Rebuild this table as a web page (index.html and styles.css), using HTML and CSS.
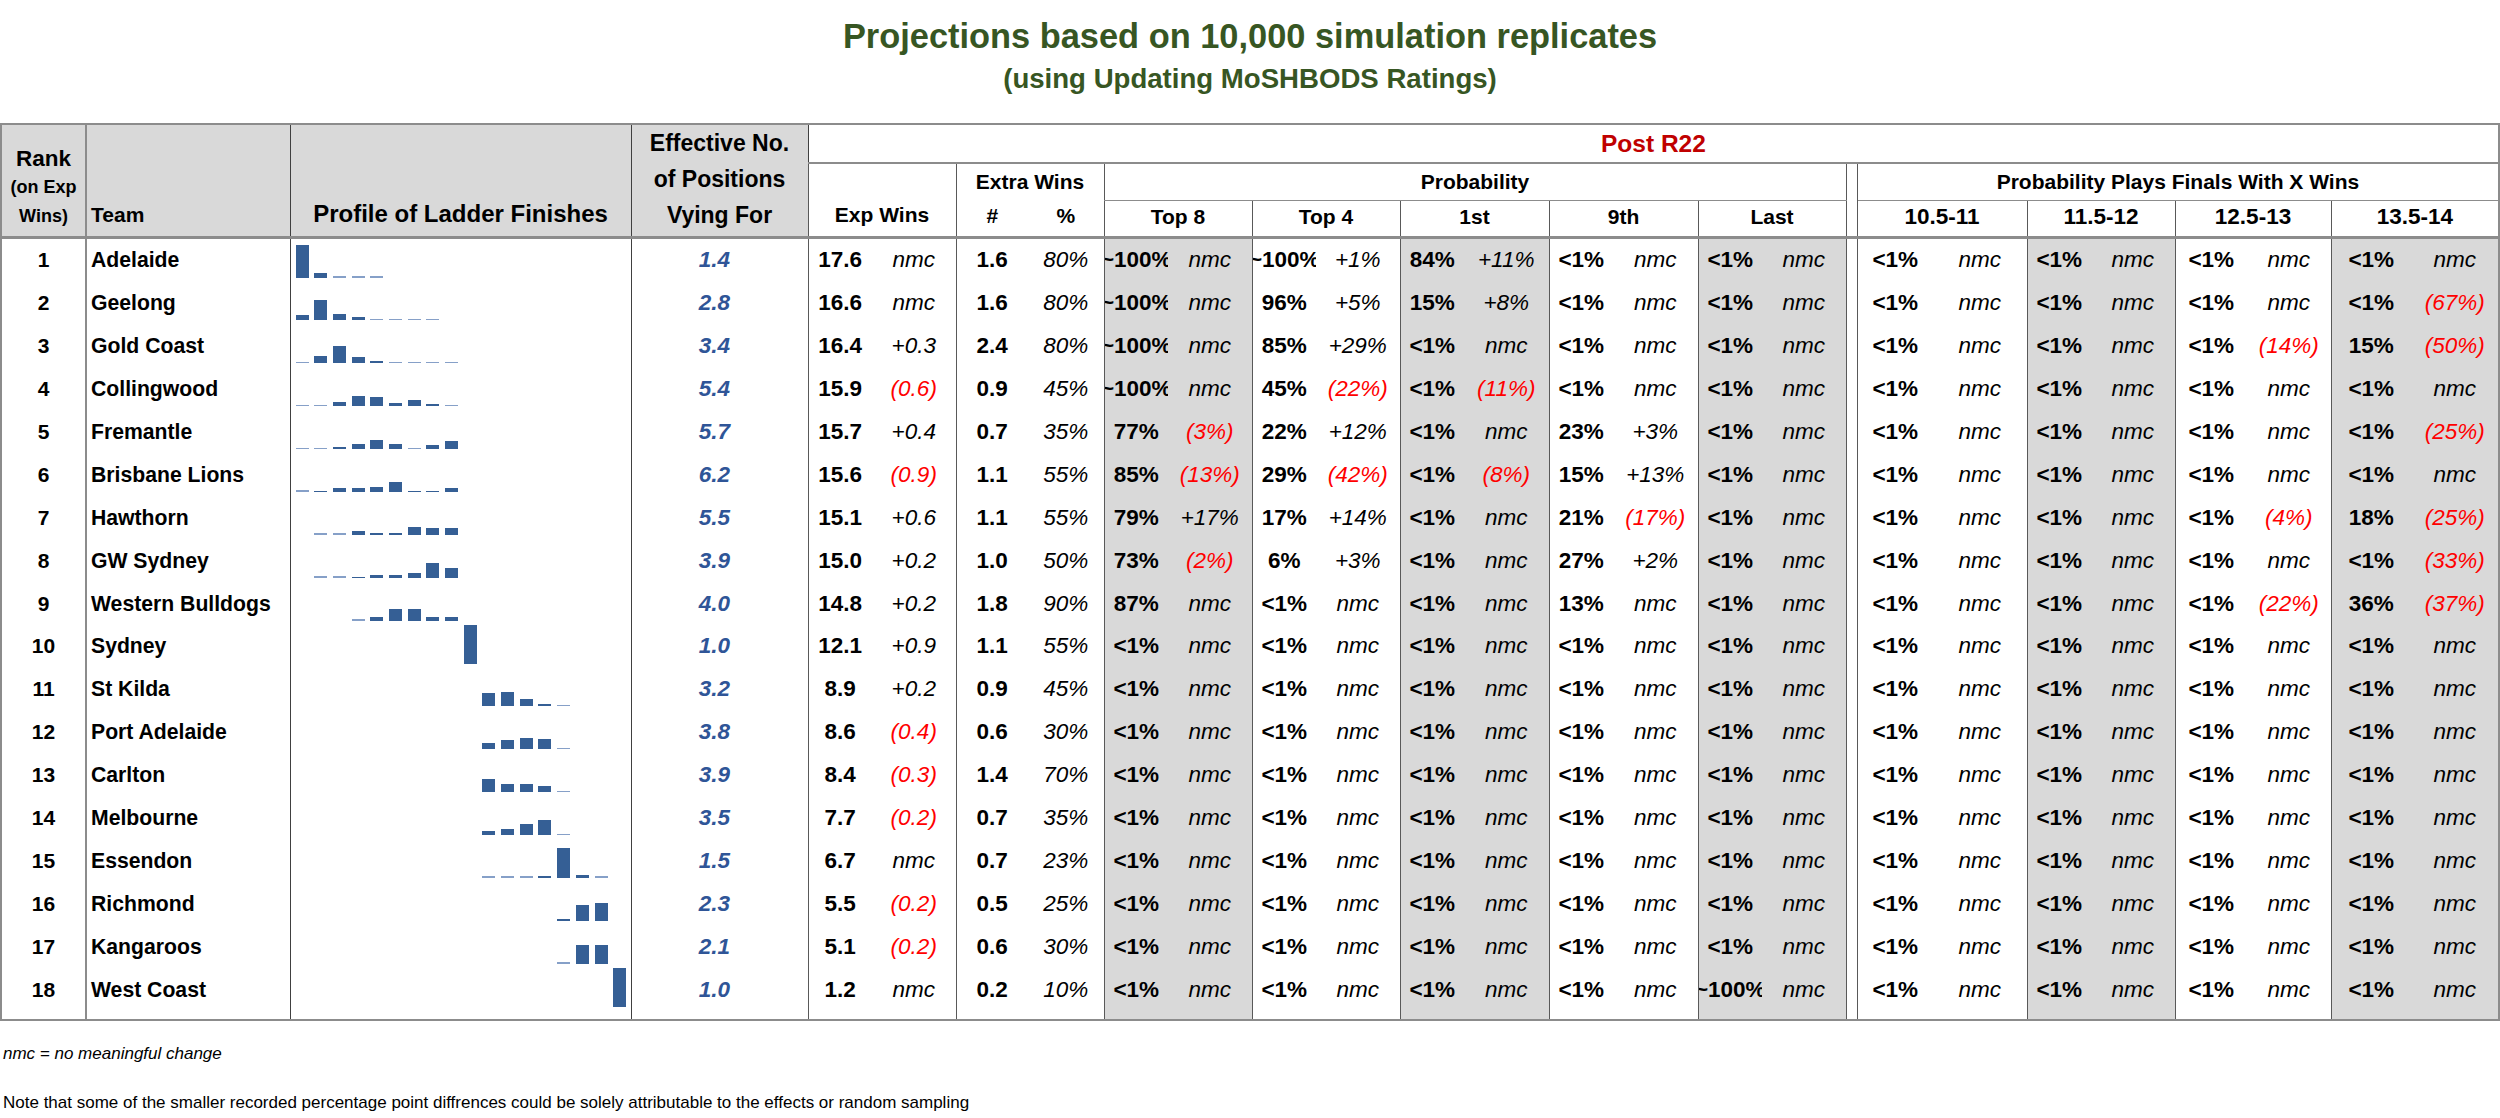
FILE: index.html
```html
<!DOCTYPE html>
<html>
<head>
<meta charset="utf-8">
<link rel="stylesheet" href="styles.css">
</head>
<body>
<div class="titles">
  <div class="t1">Projections based on 10,000 simulation replicates</div>
  <div class="t2">(using Updating MoSHBODS Ratings)</div>
</div>
<table class="proj">
<colgroup>
<col class="w85"><col class="w204"><col class="w341"><col class="w177">
<col class="w64"><col class="w84">
<col class="w72"><col class="w76">
<col class="w64 gry"><col class="w84 gry">
<col class="w64"><col class="w84">
<col class="w64 gry"><col class="w85 gry">
<col class="w64"><col class="w85">
<col class="w64 gry"><col class="w84 gry">
<col class="w11">
<col class="w76"><col class="w94">
<col class="w64 gry"><col class="w84 gry">
<col class="w72"><col class="w84">
<col class="w80 gry"><col class="w88 gry">
</colgroup>
<thead>
<tr class="hA">
  <th rowspan="3" class="hl rkh">Rank<br><span class="sm">(on Exp<br>Wins)</span></th>
  <th rowspan="3" class="hl tmh">Team</th>
  <th rowspan="3" class="hl pfh">Profile of Ladder Finishes</th>
  <th rowspan="3" class="hl efh">Effective No.<br>of Positions<br>Vying For</th>
  <th colspan="23" class="post">Post R22</th>
</tr>
<tr class="hB">
  <th colspan="2" rowspan="2" class="gl expw">Exp Wins</th>
  <th colspan="2" class="gl xw">Extra Wins</th>
  <th colspan="10" class="gl grp">Probability</th>
  <th rowspan="2" class="sp hb"></th>
  <th colspan="8" class="gl grp">Probability Plays Finals With X Wins</th>
</tr>
<tr class="hC">
  <th class="gl hb">#</th><th class="hb">%</th>
  <th colspan="2" class="gl hb">Top 8</th>
  <th colspan="2" class="gl hb">Top 4</th>
  <th colspan="2" class="gl hb">1st</th>
  <th colspan="2" class="gl hb">9th</th>
  <th colspan="2" class="gl hb">Last</th>
  <th colspan="2" class="gl hb rng">10.5-11</th>
  <th colspan="2" class="gl hb rng">11.5-12</th>
  <th colspan="2" class="gl hb rng">12.5-13</th>
  <th colspan="2" class="gl hb rng">13.5-14</th>
</tr>
</thead>
<tbody>
<tr>
<td class="rk">1</td><td class="tm">Adelaide</td>
<td class="pf"><div class="spark"><i style="height:32.3px"></i><i style="height:5px"></i><i class="t"></i><i class="t"></i><i class="t"></i></div></td>
<td class="ef">1.4</td>
<td class="v gl">17.6</td><td class="c">nmc</td>
<td class="v gl">1.6</td><td class="c">80%</td>
<td class="v gl"><div class="ov">~100%</div></td><td class="c">nmc</td>
<td class="v gl"><div class="ov">~100%</div></td><td class="c">+1%</td>
<td class="v gl">84%</td><td class="c">+11%</td>
<td class="v gl">&lt;1%</td><td class="c">nmc</td>
<td class="v gl">&lt;1%</td><td class="c">nmc</td>
<td class="sp"></td>
<td class="v gl">&lt;1%</td><td class="c">nmc</td>
<td class="v gl">&lt;1%</td><td class="c">nmc</td>
<td class="v gl">&lt;1%</td><td class="c">nmc</td>
<td class="v gl">&lt;1%</td><td class="c">nmc</td>
</tr>
<tr>
<td class="rk">2</td><td class="tm">Geelong</td>
<td class="pf"><div class="spark"><i style="height:5.4px"></i><i style="height:20.4px"></i><i style="height:6.5px"></i><i style="height:3.1px"></i><i class="t"></i><i class="t"></i><i class="t"></i><i class="t"></i></div></td>
<td class="ef">2.8</td>
<td class="v gl">16.6</td><td class="c">nmc</td>
<td class="v gl">1.6</td><td class="c">80%</td>
<td class="v gl"><div class="ov">~100%</div></td><td class="c">nmc</td>
<td class="v gl">96%</td><td class="c">+5%</td>
<td class="v gl">15%</td><td class="c">+8%</td>
<td class="v gl">&lt;1%</td><td class="c">nmc</td>
<td class="v gl">&lt;1%</td><td class="c">nmc</td>
<td class="sp"></td>
<td class="v gl">&lt;1%</td><td class="c">nmc</td>
<td class="v gl">&lt;1%</td><td class="c">nmc</td>
<td class="v gl">&lt;1%</td><td class="c">nmc</td>
<td class="v gl">&lt;1%</td><td class="c r">(67%)</td>
</tr>
<tr>
<td class="rk">3</td><td class="tm">Gold Coast</td>
<td class="pf"><div class="spark"><i class="t"></i><i style="height:6.9px"></i><i style="height:16.9px"></i><i style="height:5.8px"></i><i style="height:2.3px"></i><i class="t"></i><i class="t"></i><i class="t"></i><i class="t"></i></div></td>
<td class="ef">3.4</td>
<td class="v gl">16.4</td><td class="c">+0.3</td>
<td class="v gl">2.4</td><td class="c">80%</td>
<td class="v gl"><div class="ov">~100%</div></td><td class="c">nmc</td>
<td class="v gl">85%</td><td class="c">+29%</td>
<td class="v gl">&lt;1%</td><td class="c">nmc</td>
<td class="v gl">&lt;1%</td><td class="c">nmc</td>
<td class="v gl">&lt;1%</td><td class="c">nmc</td>
<td class="sp"></td>
<td class="v gl">&lt;1%</td><td class="c">nmc</td>
<td class="v gl">&lt;1%</td><td class="c">nmc</td>
<td class="v gl">&lt;1%</td><td class="c r">(14%)</td>
<td class="v gl">15%</td><td class="c r">(50%)</td>
</tr>
<tr>
<td class="rk">4</td><td class="tm">Collingwood</td>
<td class="pf"><div class="spark"><i class="t"></i><i class="t"></i><i style="height:4.3px"></i><i style="height:10px"></i><i style="height:9px"></i><i style="height:3.3px"></i><i style="height:5.7px"></i><i style="height:2.3px"></i><i class="t"></i></div></td>
<td class="ef">5.4</td>
<td class="v gl">15.9</td><td class="c r">(0.6)</td>
<td class="v gl">0.9</td><td class="c">45%</td>
<td class="v gl"><div class="ov">~100%</div></td><td class="c">nmc</td>
<td class="v gl">45%</td><td class="c r">(22%)</td>
<td class="v gl">&lt;1%</td><td class="c r">(11%)</td>
<td class="v gl">&lt;1%</td><td class="c">nmc</td>
<td class="v gl">&lt;1%</td><td class="c">nmc</td>
<td class="sp"></td>
<td class="v gl">&lt;1%</td><td class="c">nmc</td>
<td class="v gl">&lt;1%</td><td class="c">nmc</td>
<td class="v gl">&lt;1%</td><td class="c">nmc</td>
<td class="v gl">&lt;1%</td><td class="c">nmc</td>
</tr>
<tr>
<td class="rk">5</td><td class="tm">Fremantle</td>
<td class="pf"><div class="spark"><i class="t"></i><i class="t"></i><i style="height:1.7px"></i><i style="height:5px"></i><i style="height:9px"></i><i style="height:5px"></i><i class="t"></i><i style="height:4px"></i><i style="height:7.7px"></i></div></td>
<td class="ef">5.7</td>
<td class="v gl">15.7</td><td class="c">+0.4</td>
<td class="v gl">0.7</td><td class="c">35%</td>
<td class="v gl">77%</td><td class="c r">(3%)</td>
<td class="v gl">22%</td><td class="c">+12%</td>
<td class="v gl">&lt;1%</td><td class="c">nmc</td>
<td class="v gl">23%</td><td class="c">+3%</td>
<td class="v gl">&lt;1%</td><td class="c">nmc</td>
<td class="sp"></td>
<td class="v gl">&lt;1%</td><td class="c">nmc</td>
<td class="v gl">&lt;1%</td><td class="c">nmc</td>
<td class="v gl">&lt;1%</td><td class="c">nmc</td>
<td class="v gl">&lt;1%</td><td class="c r">(25%)</td>
</tr>
<tr>
<td class="rk">6</td><td class="tm">Brisbane Lions</td>
<td class="pf"><div class="spark"><i class="t"></i><i style="height:1.3px"></i><i style="height:4px"></i><i style="height:4px"></i><i style="height:5.3px"></i><i style="height:9.7px"></i><i style="height:1.3px"></i><i style="height:1.3px"></i><i style="height:4px"></i></div></td>
<td class="ef">6.2</td>
<td class="v gl">15.6</td><td class="c r">(0.9)</td>
<td class="v gl">1.1</td><td class="c">55%</td>
<td class="v gl">85%</td><td class="c r">(13%)</td>
<td class="v gl">29%</td><td class="c r">(42%)</td>
<td class="v gl">&lt;1%</td><td class="c r">(8%)</td>
<td class="v gl">15%</td><td class="c">+13%</td>
<td class="v gl">&lt;1%</td><td class="c">nmc</td>
<td class="sp"></td>
<td class="v gl">&lt;1%</td><td class="c">nmc</td>
<td class="v gl">&lt;1%</td><td class="c">nmc</td>
<td class="v gl">&lt;1%</td><td class="c">nmc</td>
<td class="v gl">&lt;1%</td><td class="c">nmc</td>
</tr>
<tr>
<td class="rk">7</td><td class="tm">Hawthorn</td>
<td class="pf"><div class="spark"><i></i><i class="t"></i><i class="t"></i><i style="height:3.7px"></i><i style="height:2px"></i><i style="height:2px"></i><i style="height:8px"></i><i style="height:7px"></i><i style="height:7px"></i></div></td>
<td class="ef">5.5</td>
<td class="v gl">15.1</td><td class="c">+0.6</td>
<td class="v gl">1.1</td><td class="c">55%</td>
<td class="v gl">79%</td><td class="c">+17%</td>
<td class="v gl">17%</td><td class="c">+14%</td>
<td class="v gl">&lt;1%</td><td class="c">nmc</td>
<td class="v gl">21%</td><td class="c r">(17%)</td>
<td class="v gl">&lt;1%</td><td class="c">nmc</td>
<td class="sp"></td>
<td class="v gl">&lt;1%</td><td class="c">nmc</td>
<td class="v gl">&lt;1%</td><td class="c">nmc</td>
<td class="v gl">&lt;1%</td><td class="c r">(4%)</td>
<td class="v gl">18%</td><td class="c r">(25%)</td>
</tr>
<tr>
<td class="rk">8</td><td class="tm">GW Sydney</td>
<td class="pf"><div class="spark"><i></i><i class="t"></i><i class="t"></i><i style="height:1px"></i><i style="height:2.7px"></i><i style="height:2.7px"></i><i style="height:4.3px"></i><i style="height:14.3px"></i><i style="height:10px"></i></div></td>
<td class="ef">3.9</td>
<td class="v gl">15.0</td><td class="c">+0.2</td>
<td class="v gl">1.0</td><td class="c">50%</td>
<td class="v gl">73%</td><td class="c r">(2%)</td>
<td class="v gl">6%</td><td class="c">+3%</td>
<td class="v gl">&lt;1%</td><td class="c">nmc</td>
<td class="v gl">27%</td><td class="c">+2%</td>
<td class="v gl">&lt;1%</td><td class="c">nmc</td>
<td class="sp"></td>
<td class="v gl">&lt;1%</td><td class="c">nmc</td>
<td class="v gl">&lt;1%</td><td class="c">nmc</td>
<td class="v gl">&lt;1%</td><td class="c">nmc</td>
<td class="v gl">&lt;1%</td><td class="c r">(33%)</td>
</tr>
<tr>
<td class="rk">9</td><td class="tm">Western Bulldogs</td>
<td class="pf"><div class="spark"><i></i><i></i><i></i><i class="t"></i><i style="height:3.3px"></i><i style="height:12px"></i><i style="height:12px"></i><i style="height:3.3px"></i><i style="height:4px"></i></div></td>
<td class="ef">4.0</td>
<td class="v gl">14.8</td><td class="c">+0.2</td>
<td class="v gl">1.8</td><td class="c">90%</td>
<td class="v gl">87%</td><td class="c">nmc</td>
<td class="v gl">&lt;1%</td><td class="c">nmc</td>
<td class="v gl">&lt;1%</td><td class="c">nmc</td>
<td class="v gl">13%</td><td class="c">nmc</td>
<td class="v gl">&lt;1%</td><td class="c">nmc</td>
<td class="sp"></td>
<td class="v gl">&lt;1%</td><td class="c">nmc</td>
<td class="v gl">&lt;1%</td><td class="c">nmc</td>
<td class="v gl">&lt;1%</td><td class="c r">(22%)</td>
<td class="v gl">36%</td><td class="c r">(37%)</td>
</tr>
<tr>
<td class="rk">10</td><td class="tm">Sydney</td>
<td class="pf"><div class="spark"><i></i><i></i><i></i><i></i><i></i><i></i><i></i><i></i><i></i><i style="height:38.5px"></i></div></td>
<td class="ef">1.0</td>
<td class="v gl">12.1</td><td class="c">+0.9</td>
<td class="v gl">1.1</td><td class="c">55%</td>
<td class="v gl">&lt;1%</td><td class="c">nmc</td>
<td class="v gl">&lt;1%</td><td class="c">nmc</td>
<td class="v gl">&lt;1%</td><td class="c">nmc</td>
<td class="v gl">&lt;1%</td><td class="c">nmc</td>
<td class="v gl">&lt;1%</td><td class="c">nmc</td>
<td class="sp"></td>
<td class="v gl">&lt;1%</td><td class="c">nmc</td>
<td class="v gl">&lt;1%</td><td class="c">nmc</td>
<td class="v gl">&lt;1%</td><td class="c">nmc</td>
<td class="v gl">&lt;1%</td><td class="c">nmc</td>
</tr>
<tr>
<td class="rk">11</td><td class="tm">St Kilda</td>
<td class="pf"><div class="spark"><i></i><i></i><i></i><i></i><i></i><i></i><i></i><i></i><i></i><i></i><i style="height:13.3px"></i><i style="height:14px"></i><i style="height:7px"></i><i style="height:2.3px"></i><i class="t"></i></div></td>
<td class="ef">3.2</td>
<td class="v gl">8.9</td><td class="c">+0.2</td>
<td class="v gl">0.9</td><td class="c">45%</td>
<td class="v gl">&lt;1%</td><td class="c">nmc</td>
<td class="v gl">&lt;1%</td><td class="c">nmc</td>
<td class="v gl">&lt;1%</td><td class="c">nmc</td>
<td class="v gl">&lt;1%</td><td class="c">nmc</td>
<td class="v gl">&lt;1%</td><td class="c">nmc</td>
<td class="sp"></td>
<td class="v gl">&lt;1%</td><td class="c">nmc</td>
<td class="v gl">&lt;1%</td><td class="c">nmc</td>
<td class="v gl">&lt;1%</td><td class="c">nmc</td>
<td class="v gl">&lt;1%</td><td class="c">nmc</td>
</tr>
<tr>
<td class="rk">12</td><td class="tm">Port Adelaide</td>
<td class="pf"><div class="spark"><i></i><i></i><i></i><i></i><i></i><i></i><i></i><i></i><i></i><i></i><i style="height:6px"></i><i style="height:9px"></i><i style="height:11.7px"></i><i style="height:10.3px"></i><i class="t"></i></div></td>
<td class="ef">3.8</td>
<td class="v gl">8.6</td><td class="c r">(0.4)</td>
<td class="v gl">0.6</td><td class="c">30%</td>
<td class="v gl">&lt;1%</td><td class="c">nmc</td>
<td class="v gl">&lt;1%</td><td class="c">nmc</td>
<td class="v gl">&lt;1%</td><td class="c">nmc</td>
<td class="v gl">&lt;1%</td><td class="c">nmc</td>
<td class="v gl">&lt;1%</td><td class="c">nmc</td>
<td class="sp"></td>
<td class="v gl">&lt;1%</td><td class="c">nmc</td>
<td class="v gl">&lt;1%</td><td class="c">nmc</td>
<td class="v gl">&lt;1%</td><td class="c">nmc</td>
<td class="v gl">&lt;1%</td><td class="c">nmc</td>
</tr>
<tr>
<td class="rk">13</td><td class="tm">Carlton</td>
<td class="pf"><div class="spark"><i></i><i></i><i></i><i></i><i></i><i></i><i></i><i></i><i></i><i></i><i style="height:13.3px"></i><i style="height:8px"></i><i style="height:8px"></i><i style="height:6.7px"></i><i class="t"></i></div></td>
<td class="ef">3.9</td>
<td class="v gl">8.4</td><td class="c r">(0.3)</td>
<td class="v gl">1.4</td><td class="c">70%</td>
<td class="v gl">&lt;1%</td><td class="c">nmc</td>
<td class="v gl">&lt;1%</td><td class="c">nmc</td>
<td class="v gl">&lt;1%</td><td class="c">nmc</td>
<td class="v gl">&lt;1%</td><td class="c">nmc</td>
<td class="v gl">&lt;1%</td><td class="c">nmc</td>
<td class="sp"></td>
<td class="v gl">&lt;1%</td><td class="c">nmc</td>
<td class="v gl">&lt;1%</td><td class="c">nmc</td>
<td class="v gl">&lt;1%</td><td class="c">nmc</td>
<td class="v gl">&lt;1%</td><td class="c">nmc</td>
</tr>
<tr>
<td class="rk">14</td><td class="tm">Melbourne</td>
<td class="pf"><div class="spark"><i></i><i></i><i></i><i></i><i></i><i></i><i></i><i></i><i></i><i></i><i style="height:4px"></i><i style="height:6px"></i><i style="height:10.7px"></i><i style="height:15px"></i><i class="t"></i></div></td>
<td class="ef">3.5</td>
<td class="v gl">7.7</td><td class="c r">(0.2)</td>
<td class="v gl">0.7</td><td class="c">35%</td>
<td class="v gl">&lt;1%</td><td class="c">nmc</td>
<td class="v gl">&lt;1%</td><td class="c">nmc</td>
<td class="v gl">&lt;1%</td><td class="c">nmc</td>
<td class="v gl">&lt;1%</td><td class="c">nmc</td>
<td class="v gl">&lt;1%</td><td class="c">nmc</td>
<td class="sp"></td>
<td class="v gl">&lt;1%</td><td class="c">nmc</td>
<td class="v gl">&lt;1%</td><td class="c">nmc</td>
<td class="v gl">&lt;1%</td><td class="c">nmc</td>
<td class="v gl">&lt;1%</td><td class="c">nmc</td>
</tr>
<tr>
<td class="rk">15</td><td class="tm">Essendon</td>
<td class="pf"><div class="spark"><i></i><i></i><i></i><i></i><i></i><i></i><i></i><i></i><i></i><i></i><i class="t"></i><i class="t"></i><i class="t"></i><i style="height:2.3px"></i><i style="height:30.3px"></i><i style="height:3px"></i><i class="t"></i></div></td>
<td class="ef">1.5</td>
<td class="v gl">6.7</td><td class="c">nmc</td>
<td class="v gl">0.7</td><td class="c">23%</td>
<td class="v gl">&lt;1%</td><td class="c">nmc</td>
<td class="v gl">&lt;1%</td><td class="c">nmc</td>
<td class="v gl">&lt;1%</td><td class="c">nmc</td>
<td class="v gl">&lt;1%</td><td class="c">nmc</td>
<td class="v gl">&lt;1%</td><td class="c">nmc</td>
<td class="sp"></td>
<td class="v gl">&lt;1%</td><td class="c">nmc</td>
<td class="v gl">&lt;1%</td><td class="c">nmc</td>
<td class="v gl">&lt;1%</td><td class="c">nmc</td>
<td class="v gl">&lt;1%</td><td class="c">nmc</td>
</tr>
<tr>
<td class="rk">16</td><td class="tm">Richmond</td>
<td class="pf"><div class="spark"><i></i><i></i><i></i><i></i><i></i><i></i><i></i><i></i><i></i><i></i><i></i><i></i><i></i><i></i><i style="height:2px"></i><i style="height:16px"></i><i style="height:18.3px"></i></div></td>
<td class="ef">2.3</td>
<td class="v gl">5.5</td><td class="c r">(0.2)</td>
<td class="v gl">0.5</td><td class="c">25%</td>
<td class="v gl">&lt;1%</td><td class="c">nmc</td>
<td class="v gl">&lt;1%</td><td class="c">nmc</td>
<td class="v gl">&lt;1%</td><td class="c">nmc</td>
<td class="v gl">&lt;1%</td><td class="c">nmc</td>
<td class="v gl">&lt;1%</td><td class="c">nmc</td>
<td class="sp"></td>
<td class="v gl">&lt;1%</td><td class="c">nmc</td>
<td class="v gl">&lt;1%</td><td class="c">nmc</td>
<td class="v gl">&lt;1%</td><td class="c">nmc</td>
<td class="v gl">&lt;1%</td><td class="c">nmc</td>
</tr>
<tr>
<td class="rk">17</td><td class="tm">Kangaroos</td>
<td class="pf"><div class="spark"><i></i><i></i><i></i><i></i><i></i><i></i><i></i><i></i><i></i><i></i><i></i><i></i><i></i><i></i><i class="t"></i><i style="height:18.3px"></i><i style="height:18.3px"></i></div></td>
<td class="ef">2.1</td>
<td class="v gl">5.1</td><td class="c r">(0.2)</td>
<td class="v gl">0.6</td><td class="c">30%</td>
<td class="v gl">&lt;1%</td><td class="c">nmc</td>
<td class="v gl">&lt;1%</td><td class="c">nmc</td>
<td class="v gl">&lt;1%</td><td class="c">nmc</td>
<td class="v gl">&lt;1%</td><td class="c">nmc</td>
<td class="v gl">&lt;1%</td><td class="c">nmc</td>
<td class="sp"></td>
<td class="v gl">&lt;1%</td><td class="c">nmc</td>
<td class="v gl">&lt;1%</td><td class="c">nmc</td>
<td class="v gl">&lt;1%</td><td class="c">nmc</td>
<td class="v gl">&lt;1%</td><td class="c">nmc</td>
</tr>
<tr>
<td class="rk">18</td><td class="tm">West Coast</td>
<td class="pf"><div class="spark"><i></i><i></i><i></i><i></i><i></i><i></i><i></i><i></i><i></i><i></i><i></i><i></i><i></i><i></i><i></i><i></i><i></i><i style="height:38.5px"></i></div></td>
<td class="ef">1.0</td>
<td class="v gl">1.2</td><td class="c">nmc</td>
<td class="v gl">0.2</td><td class="c">10%</td>
<td class="v gl">&lt;1%</td><td class="c">nmc</td>
<td class="v gl">&lt;1%</td><td class="c">nmc</td>
<td class="v gl">&lt;1%</td><td class="c">nmc</td>
<td class="v gl">&lt;1%</td><td class="c">nmc</td>
<td class="v gl"><div class="ov">~100%</div></td><td class="c">nmc</td>
<td class="sp"></td>
<td class="v gl">&lt;1%</td><td class="c">nmc</td>
<td class="v gl">&lt;1%</td><td class="c">nmc</td>
<td class="v gl">&lt;1%</td><td class="c">nmc</td>
<td class="v gl">&lt;1%</td><td class="c">nmc</td>
</tr>
<tr class="endrow">
<td class="rk"></td><td class="tm"></td><td class="pf"></td><td class="ef"></td>
<td class="gl"></td><td></td><td class="gl"></td><td></td>
<td class="gl"></td><td></td><td class="gl"></td><td></td>
<td class="gl"></td><td></td><td class="gl"></td><td></td>
<td class="gl"></td><td></td><td class="sp"></td>
<td class="gl"></td><td></td><td class="gl"></td><td></td>
<td class="gl"></td><td></td><td class="gl"></td><td></td>
</tr>
</tbody>
</table>
<div class="foot">
  <div class="f1">nmc = no meaningful change</div>
  <div class="f2">Note that some of the smaller recorded percentage point diffrences could be solely attributable to the effects or random sampling</div>
</div>
</body>
</html>
```

FILE: styles.css
```css
body {
  margin: 0;
  background: #fff;
  color: #000;
  font-family: "Liberation Sans", Arial, sans-serif;
}

.titles {
  height: 123px;
  box-sizing: border-box;
  padding-top: 15px;
  text-align: center;
  color: #375623;
  font-weight: 700;
}
.t1 { font-size: 34.4px; line-height: 42px; }
.t2 { font-size: 27.6px; line-height: 34px; margin-top: 5px; }

.proj {
  border-collapse: collapse;
  table-layout: fixed;
  width: 2498px;
  border-top: 2px solid #8c8c8c;
  border-left: 2px solid #8c8c8c;
  border-right: 2px solid #8c8c8c;
}
.w85 { width: 85px; } .w204 { width: 204px; } .w341 { width: 341px; } .w177 { width: 177px; }
.w64 { width: 64px; } .w84 { width: 84px; } .w85 { width: 85px; } .w72 { width: 72px; }
.w76 { width: 76px; } .w94 { width: 94px; } .w80 { width: 80px; } .w88 { width: 88px; }
.w11 { width: 11px; }
.gry { background: #d9d9d9; }

th {
  padding: 0;
  font-weight: 700;
  font-size: 21px;
  background: #fff;
  white-space: nowrap;
}
.hA { height: 39px; }
.hB { height: 35px; }
.hC { height: 37px; }

.hl {
  background: #d9d9d9;
  vertical-align: bottom;
  border-bottom: 3px solid #8c8c8c;
}
.rkh { line-height: 27px; padding-bottom: 6px; font-size: 22.5px; }
.rkh .sm { font-size: 18px; }
.tmh { text-align: left; padding-left: 4px; padding-bottom: 7px; line-height: 28px; border-left: 2px solid #8c8c8c; }
.pfh { font-size: 24px; padding-bottom: 6px; line-height: 32px; border-left: 1px solid #404040; }
.efh { font-size: 23px; line-height: 36px; padding-bottom: 3px; border-left: 1px solid #404040; }

.post {
  color: #c00000;
  font-size: 24.5px;
  border-left: 1px solid #404040;
  border-bottom: 2px solid #8c8c8c;
}
.expw { vertical-align: bottom; padding-bottom: 7px; line-height: 28px; border-bottom: 3px solid #8c8c8c; }
.xw { vertical-align: middle; }
.grp { border-bottom: 1px solid #8c8c8c; }
.hb { border-bottom: 3px solid #8c8c8c; padding-bottom: 4px; }
.rng { font-size: 22.5px; }

.gl { border-left: 1px solid #595959; }
.sp { border-left: 1px solid #595959; border-right: 1px solid #595959; background: #fff; }

td {
  padding: 0;
  height: 42.9px;
  text-align: center;
  white-space: nowrap;
  overflow: hidden;
  font-size: 22.5px;
}
.rk { font-weight: 700; font-size: 21px; }
.tm { font-weight: 700; font-size: 21.2px; text-align: left; padding-left: 4px; border-left: 2px solid #8c8c8c; }
.pf { vertical-align: top; border-left: 1px solid #404040; }
.ef { font-weight: 700; font-style: italic; color: #2f5597; padding-right: 10px; border-left: 1px solid #404040; }
.v { font-weight: 700; }
.c { font-style: italic; }
.r { color: #ff0000; }
.ov {
  display: flex;
  justify-content: center;
  overflow: hidden;
  white-space: nowrap;
}

.spark {
  display: flex;
  align-items: flex-end;
  gap: 5.7px;
  height: 38.5px;
  padding-left: 5px;
}
.spark i {
  display: block;
  flex: 0 0 13px;
  width: 13px;
  background: #355f95;
}
.spark i.t {
  height: 1.5px;
  background: #86a0c8;
}

.endrow td { height: 8px; border-bottom: 2px solid #8c8c8c; }

.foot { padding-left: 3px; font-size: 17px; }
.f1 { font-style: italic; line-height: 20px; margin-top: 23px; }
.f2 { line-height: 20px; margin-top: 29px; }
```
